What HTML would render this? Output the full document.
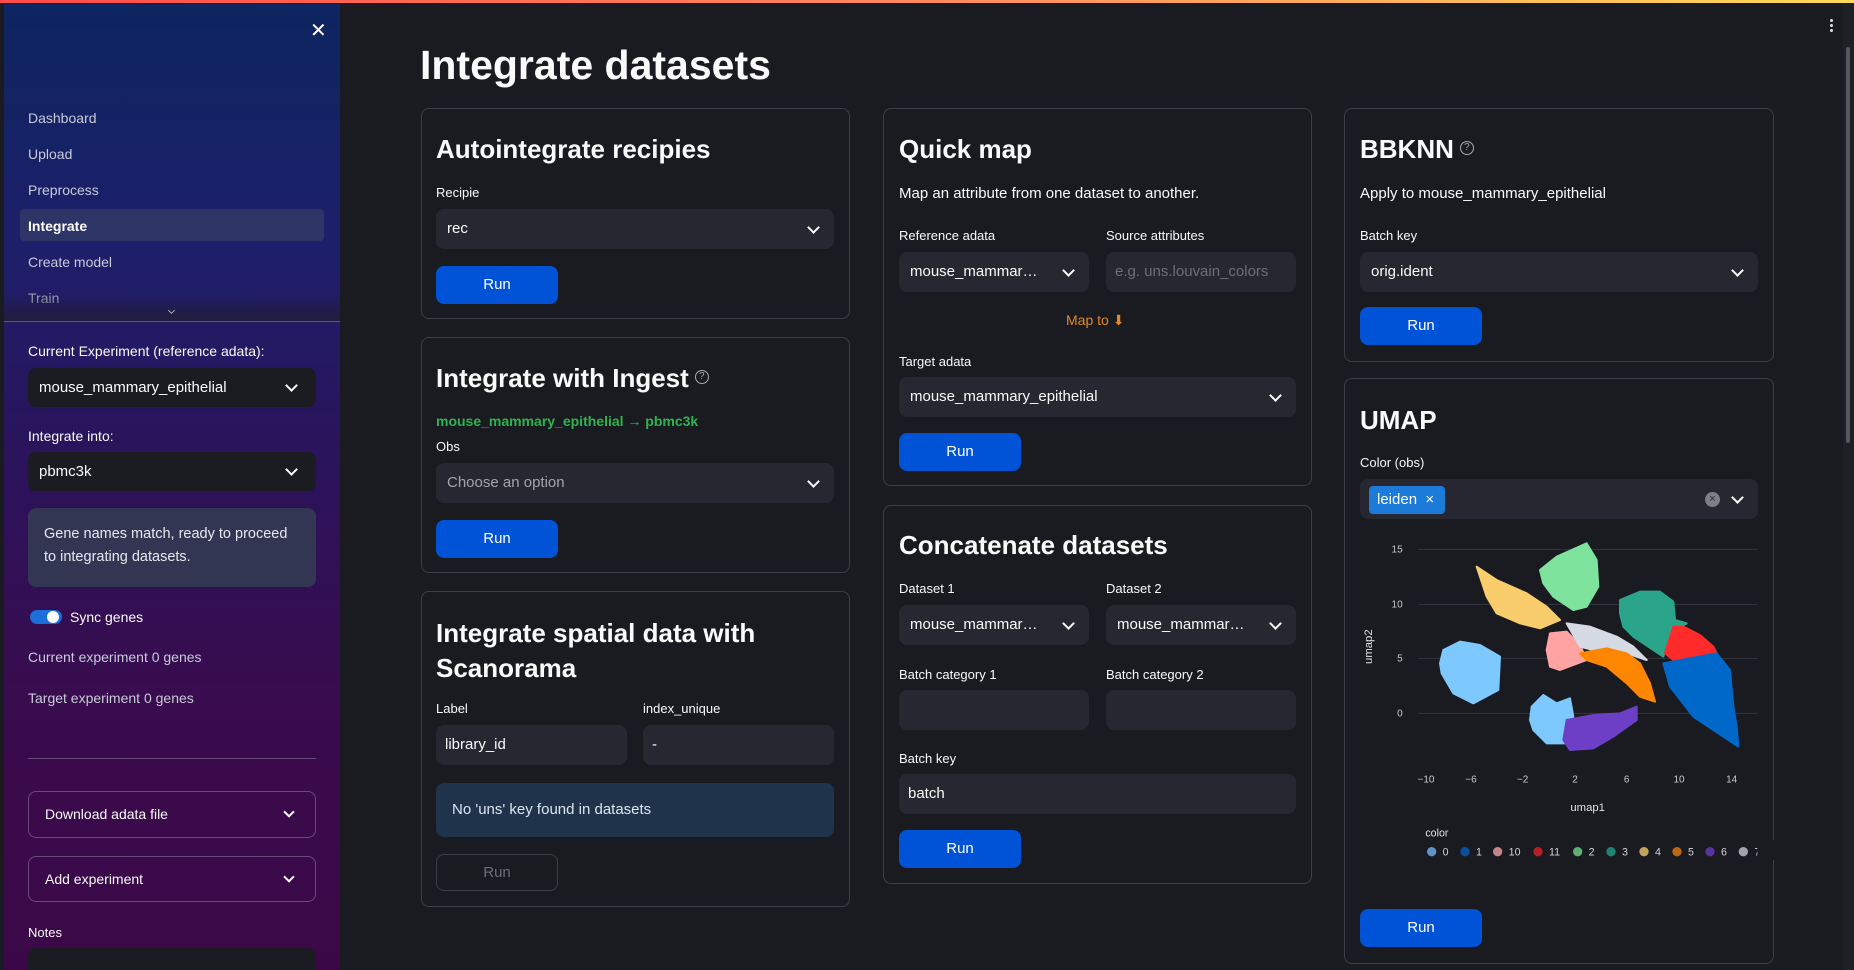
<!DOCTYPE html>
<html><head><meta charset="utf-8"><style>
*{box-sizing:border-box;margin:0;padding:0}
html,body{width:1854px;height:970px;overflow:hidden}
body{background:#1a1b20;font-family:"Liberation Sans",sans-serif;color:#fafafa;position:relative}
.a{position:absolute}
.main{position:absolute;left:340px;top:0;width:1514px;height:970px;background:#1a1b20}
.card{position:absolute;border:1px solid #3d3e45;border-radius:8px}
.h{position:absolute;font-size:26px;font-weight:bold;color:#fafafa;white-space:nowrap}
.lb{position:absolute;font-size:13px;color:#fafafa;white-space:nowrap}
.tx{position:absolute;font-size:15px;color:#fafafa;white-space:nowrap}
.sel{position:absolute;background:#262730;border-radius:8px;height:40px;font-size:15px;line-height:40px;padding-left:11px;color:#fafafa;white-space:nowrap;overflow:hidden}
.sel.ch::after{content:"";position:absolute;right:16px;top:14px;width:7px;height:7px;border-right:2px solid #fafafa;border-bottom:2px solid #fafafa;transform:rotate(45deg)}
.btn{position:absolute;background:#0052d6;border-radius:8px;width:122px;height:38px;line-height:38px;text-align:center;font-size:15px;color:#fff}
.q{display:inline-block;width:14px;height:14px;border:1.5px solid #aaa;border-radius:50%;font-size:10px;line-height:11px;text-align:center;color:#aaa;font-weight:normal;vertical-align:middle;margin-left:6px;position:relative;top:-3px}
.side{position:absolute;left:4px;top:4px;width:336px;height:966px;background:linear-gradient(180deg,#0d2560 0%,#1d1f6a 25%,#2c1259 50%,#3a0b4c 75%,#3b0847 100%)}
.nav{position:absolute;left:28px;font-size:14px;color:#c8cbd8}
.sb{position:absolute;left:28px;font-size:14px;color:#fafafa}
.ssel{position:absolute;left:28px;width:288px;height:39px;background:#1b1c22;border-radius:8px;font-size:15px;line-height:39px;padding-left:11px;color:#fafafa}
.ssel::after{content:"";position:absolute;right:20px;top:13px;width:7px;height:7px;border-right:2px solid #fafafa;border-bottom:2px solid #fafafa;transform:rotate(45deg)}
.exp{position:absolute;left:28px;width:288px;border:1px solid #6a4a7a;border-radius:8px;font-size:14px;padding-left:16px;color:#fafafa}
.exp::after{content:"";position:absolute;right:22px;top:16px;width:6px;height:6px;border-right:2px solid #fafafa;border-bottom:2px solid #fafafa;transform:rotate(45deg)}
</style></head><body>
<div class="main"></div>
<div class="a" style="left:0;top:0;width:340px;height:970px;background:#1a1b20"></div>
<div class="side">
  <div class="a" style="left:306px;top:14px;font-size:20px;color:#fff">✕</div>
</div>
<div class="a" style="left:0;top:0;width:1854px;height:3px;background:linear-gradient(90deg,#ff4b4b,#ff8a5c 50%,#fdd95a)"></div>
<div class="nav" style="top:110px">Dashboard</div>
<div class="nav" style="top:146px">Upload</div>
<div class="nav" style="top:182px">Preprocess</div>
<div class="a" style="left:20px;top:209px;width:304px;height:32px;background:#2e3566;border-radius:4px"></div>
<div class="nav" style="top:218px;color:#fff;font-weight:bold">Integrate</div>
<div class="nav" style="top:254px">Create model</div>
<div class="nav" style="top:290px;color:#9a9db0">Train</div>
<div class="a" style="left:4px;top:295px;width:336px;height:26px;background:linear-gradient(180deg,rgba(30,30,40,0),rgba(30,30,40,.7))"></div>
<div class="a" style="left:169px;top:308px;width:5px;height:5px;border-right:1px solid #aaa;border-bottom:1px solid #aaa;transform:rotate(45deg)"></div>
<div class="a" style="left:4px;top:321px;width:336px;height:1px;background:#555a70"></div>
<div class="sb" style="top:343px">Current Experiment (reference adata):</div>
<div class="ssel" style="top:368px">mouse_mammary_epithelial</div>
<div class="sb" style="top:428px">Integrate into:</div>
<div class="ssel" style="top:452px">pbmc3k</div>
<div class="a" style="left:28px;top:508px;width:288px;height:79px;background:#323653;border-radius:8px;padding:15px 16px;font-size:14.5px;line-height:23px;color:#e6e8f0">Gene names match, ready to proceed to integrating datasets.</div>
<div class="a" style="left:30px;top:610px;width:32px;height:14px;background:#1c6fd8;border-radius:7px"></div>
<div class="a" style="left:47px;top:611px;width:12px;height:12px;background:#fff;border-radius:50%"></div>
<div class="sb" style="top:609px;left:70px">Sync genes</div>
<div class="nav" style="top:649px">Current experiment 0 genes</div>
<div class="nav" style="top:690px">Target experiment 0 genes</div>
<div class="a" style="left:28px;top:758px;width:288px;height:1px;background:#6a4a7a"></div>
<div class="exp" style="top:791px;height:47px;line-height:45px">Download adata file</div>
<div class="exp" style="top:856px;height:46px;line-height:44px">Add experiment</div>
<div class="sb" style="top:925px;font-size:13px">Notes</div>
<div class="a" style="left:28px;top:948px;width:288px;height:22px;background:#1b1c22;border-radius:8px 8px 0 0"></div>

<div class="a" style="left:1843px;top:3px;width:11px;height:967px;background:#1f2025"></div>
<div class="a" style="left:1846px;top:47px;width:4px;height:396px;background:#55575e;border-radius:2px"></div>
<div class="a" style="left:1830px;top:19px;width:3px;height:3px;background:#ddd;border-radius:50%;box-shadow:0 5px 0 #ddd,0 10px 0 #ddd"></div>

<div class="a" style="left:420px;top:42px;font-size:41px;font-weight:bold;color:#fafafa">Integrate datasets</div>

<!-- col1 -->
<div class="card" style="left:421px;top:108px;width:429px;height:211px"></div>
<div class="h" style="left:436px;top:134px">Autointegrate recipies</div>
<div class="lb" style="left:436px;top:185px">Recipie</div>
<div class="sel ch" style="left:436px;top:209px;width:398px">rec</div>
<div class="btn" style="left:436px;top:266px">Run</div>

<div class="card" style="left:421px;top:337px;width:429px;height:236px"></div>
<div class="h" style="left:436px;top:363px">Integrate with Ingest<span class="q">?</span></div>
<div class="a" style="left:436px;top:413px;font-size:14px;font-weight:bold;color:#2fb350">mouse_mammary_epithelial → pbmc3k</div>
<div class="lb" style="left:436px;top:439px">Obs</div>
<div class="sel ch" style="left:436px;top:463px;width:398px;color:#a3a5ad">Choose an option</div>
<div class="btn" style="left:436px;top:520px">Run</div>

<div class="card" style="left:421px;top:591px;width:429px;height:316px"></div>
<div class="h" style="left:436px;top:616px;line-height:35px">Integrate spatial data with<br>Scanorama</div>
<div class="lb" style="left:436px;top:701px">Label</div>
<div class="lb" style="left:643px;top:701px">index_unique</div>
<div class="sel" style="left:436px;top:725px;width:191px;padding-left:9px">library_id</div>
<div class="sel" style="left:643px;top:725px;width:191px;padding-left:9px">-</div>
<div class="a" style="left:436px;top:783px;width:398px;height:54px;background:#1f344b;border-radius:8px;padding-left:16px;line-height:54px;font-size:15px;color:#dce6f2">No 'uns' key found in datasets</div>
<div class="btn" style="left:436px;top:854px;height:37px;background:transparent;border:1px solid #3d3e45;color:#6d6f76;line-height:35px">Run</div>

<!-- col2 -->
<div class="card" style="left:883px;top:108px;width:429px;height:378px"></div>
<div class="h" style="left:899px;top:134px">Quick map</div>
<div class="tx" style="left:899px;top:185px">Map an attribute from one dataset to another.</div>
<div class="lb" style="left:899px;top:228px">Reference adata</div>
<div class="lb" style="left:1106px;top:228px">Source attributes</div>
<div class="sel ch" style="left:899px;top:252px;width:190px">mouse_mammar…</div>
<div class="sel" style="left:1106px;top:252px;width:190px;color:#6d6f76;padding-left:9px">e.g. uns.louvain_colors</div>
<div class="tx" style="left:1066px;top:312px;color:#e0892a;font-size:14px">Map to ⬇</div>
<div class="lb" style="left:899px;top:354px">Target adata</div>
<div class="sel ch" style="left:899px;top:377px;width:397px">mouse_mammary_epithelial</div>
<div class="btn" style="left:899px;top:433px">Run</div>

<div class="card" style="left:883px;top:505px;width:429px;height:379px"></div>
<div class="h" style="left:899px;top:530px">Concatenate datasets</div>
<div class="lb" style="left:899px;top:581px">Dataset 1</div>
<div class="lb" style="left:1106px;top:581px">Dataset 2</div>
<div class="sel ch" style="left:899px;top:605px;width:190px">mouse_mammar…</div>
<div class="sel ch" style="left:1106px;top:605px;width:190px">mouse_mammar…</div>
<div class="lb" style="left:899px;top:667px">Batch category 1</div>
<div class="lb" style="left:1106px;top:667px">Batch category 2</div>
<div class="sel" style="left:899px;top:690px;width:190px"></div>
<div class="sel" style="left:1106px;top:690px;width:190px"></div>
<div class="lb" style="left:899px;top:751px">Batch key</div>
<div class="sel" style="left:899px;top:774px;width:397px;padding-left:9px">batch</div>
<div class="btn" style="left:899px;top:830px">Run</div>

<!-- col3 -->
<div class="card" style="left:1344px;top:108px;width:430px;height:254px"></div>
<div class="h" style="left:1360px;top:134px">BBKNN<span class="q">?</span></div>
<div class="tx" style="left:1360px;top:185px">Apply to mouse_mammary_epithelial</div>
<div class="lb" style="left:1360px;top:228px">Batch key</div>
<div class="sel ch" style="left:1360px;top:252px;width:398px">orig.ident</div>
<div class="btn" style="left:1360px;top:307px">Run</div>

<div class="card" style="left:1344px;top:378px;width:430px;height:586px"></div>
<div class="h" style="left:1360px;top:405px">UMAP</div>
<div class="lb" style="left:1360px;top:455px">Color (obs)</div>
<div class="sel ch" style="left:1360px;top:479px;width:398px"></div>
<div class="a" style="left:1369px;top:486px;width:76px;height:28px;background:#1c7ad8;border-radius:4px;font-size:15px;line-height:28px;padding-left:8px;color:#fff">leiden&nbsp;&nbsp;×</div>
<div class="a" style="left:1705px;top:492px;width:15px;height:15px;background:#7d7f88;border-radius:50%;font-size:11px;line-height:15px;text-align:center;color:#262730">×</div>

<svg class="a" style="left:1340px;top:520px" width="440" height="360" viewBox="0 0 1320 1080" font-family="Liberation Sans,sans-serif">
<g stroke="#34363f" stroke-width="3"><line x1="235" y1="88" x2="1252" y2="88"/><line x1="235" y1="253" x2="1252" y2="253"/><line x1="235" y1="415" x2="1252" y2="415"/><line x1="235" y1="580" x2="1252" y2="580"/></g>
<g fill="#c8cad0" font-size="30" text-anchor="end"><text x="188" y="98">15</text><text x="188" y="263">10</text><text x="188" y="425">5</text><text x="188" y="590">0</text></g>
<g fill="#c8cad0" font-size="30" text-anchor="middle"><text x="258" y="788">−10</text><text x="393" y="788">−6</text><text x="548" y="788">−2</text><text x="705" y="788">2</text><text x="860" y="788">6</text><text x="1017" y="788">10</text><text x="1175" y="788">14</text></g>
<text x="743" y="873" fill="#e0e2e8" font-size="34" text-anchor="middle">umap1</text>
<text transform="translate(96,380) rotate(-90)" fill="#e0e2e8" font-size="34" text-anchor="middle">umap2</text>
<g stroke-linejoin="round" stroke-width="6">
<polygon fill="#7dc9ff" stroke="#7dc9ff" points="310,390 360,365 420,375 480,410 475,510 400,550 340,520 305,460 300,430"/>
<polygon fill="#7dc9ff" stroke="#7dc9ff" points="575,560 610,525 650,550 690,535 700,590 680,670 620,670 580,630 570,600"/>
<polygon fill="#6d3fc6" stroke="#6d3fc6" points="680,600 760,585 840,580 890,560 890,600 820,650 760,685 690,690 670,660"/>
<polygon fill="#f9cd6c" stroke="#f9cd6c" points="410,140 470,180 560,220 620,260 660,300 600,325 540,310 470,280 440,230"/>
<polygon fill="#7ee39c" stroke="#7ee39c" points="600,150 650,110 740,70 770,120 775,200 740,260 700,270 640,230 610,190"/>
<polygon fill="#2aa58a" stroke="#2aa58a" points="840,240 900,215 960,215 1000,245 1005,300 1040,310 990,340 970,410 940,390 880,350 850,320 840,280"/>
<polygon fill="#ff2b2b" stroke="#ff2b2b" points="1000,320 1030,320 1080,345 1120,380 1130,400 1080,420 1000,420 975,400"/>
<polygon fill="#0068c9" stroke="#0068c9" points="970,430 1050,415 1130,400 1170,450 1180,560 1190,620 1195,680 1150,650 1060,590 990,500"/>
<polygon fill="#ffa3a3" stroke="#ffa3a3" points="630,340 680,335 720,375 740,420 700,435 660,450 630,440 620,390"/>
<polygon fill="#d5dae5" stroke="#d5dae5" points="680,310 750,320 830,350 880,380 920,420 860,400 760,390 720,380"/>
<polygon fill="#ff8700" stroke="#ff8700" points="720,400 800,385 860,400 900,430 930,490 945,545 900,530 860,490 800,440 740,420"/>
</g>
<text x="256" y="950" fill="#e0e2e8" font-size="32">color</text>
<g font-size="32" fill="#d0d2d8">
<circle cx="275" cy="995" r="14" fill="#5f92c2"/><text x="308" y="1006">0</text>
<circle cx="375" cy="995" r="14" fill="#0a4f9c"/><text x="408" y="1006">1</text>
<circle cx="473" cy="995" r="14" fill="#c38686"/><text x="506" y="1006">10</text>
<circle cx="594" cy="995" r="14" fill="#b52026"/><text x="627" y="1006">11</text>
<circle cx="713" cy="995" r="14" fill="#5fae75"/><text x="746" y="1006">2</text>
<circle cx="813" cy="995" r="14" fill="#1f8570"/><text x="846" y="1006">3</text>
<circle cx="912" cy="995" r="14" fill="#c4a35a"/><text x="945" y="1006">4</text>
<circle cx="1011" cy="995" r="14" fill="#bb6810"/><text x="1044" y="1006">5</text>
<circle cx="1110" cy="995" r="14" fill="#55359e"/><text x="1143" y="1006">6</text>
<circle cx="1210" cy="995" r="14" fill="#9fa3ab"/><text x="1243" y="1006">7</text>
</g>
<rect x="1252" y="960" width="68" height="60" fill="#1a1b20"/>
</svg>
<div class="btn" style="left:1360px;top:909px">Run</div>
</body></html>
